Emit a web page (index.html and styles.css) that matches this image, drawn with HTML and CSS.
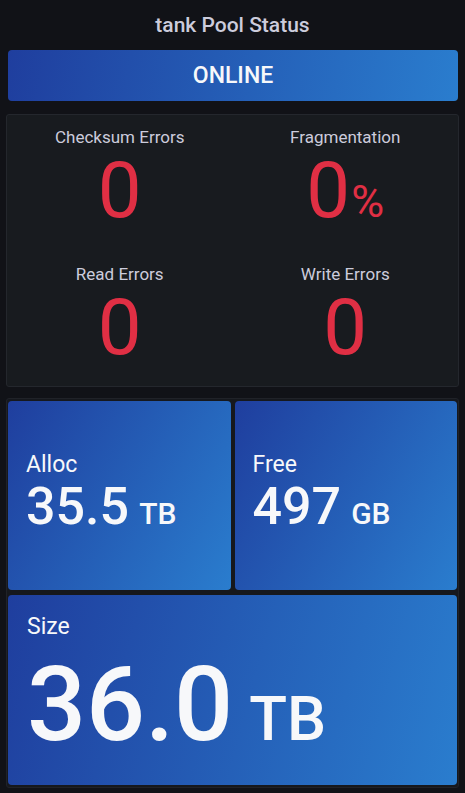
FILE: index.html
```html
<!DOCTYPE html>
<html>
<head>
<meta charset="utf-8">
<link rel="stylesheet" href="styles.css">
</head>
<body>
<div class="page">
  <div class="header">tank Pool Status</div>
  <div class="status">ONLINE</div>
  <div class="errors">
    <div class="cell">
      <div class="label">Checksum Errors</div>
      <div class="num">0</div>
    </div>
    <div class="cell">
      <div class="label">Fragmentation</div>
      <div class="num">0<span class="pct">%</span></div>
    </div>
    <div class="cell">
      <div class="label">Read Errors</div>
      <div class="num">0</div>
    </div>
    <div class="cell">
      <div class="label">Write Errors</div>
      <div class="num">0</div>
    </div>
  </div>
  <div class="capacity">
    <div class="tile small">
      <div class="tlabel">Alloc</div>
      <div class="tvalue">35.5<span class="unit">TB</span></div>
    </div>
    <div class="tile small">
      <div class="tlabel">Free</div>
      <div class="tvalue">497<span class="unit">GB</span></div>
    </div>
    <div class="tile big">
      <div class="tlabel">Size</div>
      <div class="tvalue">36.0<span class="unit">TB</span></div>
    </div>
  </div>
</div>
</body>
</html>
```
FILE: styles.css
```css
html, body {
  margin: 0;
  padding: 0;
  background: #111217;
  font-family: Roboto, "Liberation Sans", sans-serif;
}
.page {
  width: 465px;
  display: flex;
  flex-direction: column;
}
.page > * {
  flex-shrink: 0;
}
.header {
  height: 50px;
  line-height: 50px;
  text-align: center;
  color: #ccccdc;
  font-size: 21px;
  font-weight: 500;
}
.status {
  margin: 0 7px 0 8px;
  height: 51px;
  border-radius: 4px;
  background: linear-gradient(100deg, #1f3e9e 0%, #2a7dce 100%);
  color: #f7f8fa;
  font-size: 23px;
  font-weight: 500;
  display: flex;
  align-items: center;
  justify-content: center;
}
.errors {
  margin: 13px 6px 0 6px;
  background: #181b1f;
  border: 1px solid #24272d;
  border-radius: 3px;
  display: grid;
  grid-template-columns: 1fr 1fr;
  row-gap: 35px;
  padding: 13px 0 19px;
}
.cell {
  display: flex;
  flex-direction: column;
  align-items: center;
}
.label {
  font-size: 17px;
  line-height: 19px;
  color: #ccccdc;
  margin-bottom: 5px;
}
.num {
  font-size: 78px;
  line-height: 78px;
  height: 78px;
  color: #e02f44;
}
.pct {
  font-size: 45px;
  line-height: 1;
  margin-left: 1px;
}
.capacity {
  margin: 11px 6px 0 6px;
  border: 1px solid #202228;
  border-radius: 3px;
  background: #16181d;
  padding: 2px 1px 2px 1px;
  display: grid;
  grid-template-columns: 1fr 1fr;
  grid-template-rows: 189px 190px;
  gap: 5px 4px;
}
.tile {
  border-radius: 4px;
  background: linear-gradient(120deg, #1f3e9e 0%, #2a7dce 100%);
  color: #f7f8fa;
  padding-left: 18px;
}
.tile.big {
  grid-column: 1 / 3;
  background: linear-gradient(105deg, #1f3e9e 0%, #2a7dce 100%);
  padding-top: 18px;
  padding-left: 19px;
}
.tile.small {
  padding-top: 50px;
}
.tlabel {
  font-size: 23px;
  line-height: 27px;
}
.tvalue {
  font-weight: 500;
}
.unit {
  line-height: 1;
  font-weight: 500;
}
.small .tvalue {
  margin-top: 3px;
  font-size: 52px;
  line-height: 52px;
}
.small .unit {
  font-size: 30px;
  margin-left: 10px;
}
.big .tvalue {
  margin-top: 13px;
  font-size: 104px;
  line-height: 104px;
}
.big .unit {
  font-size: 62px;
  margin-left: 16px;
}
```
